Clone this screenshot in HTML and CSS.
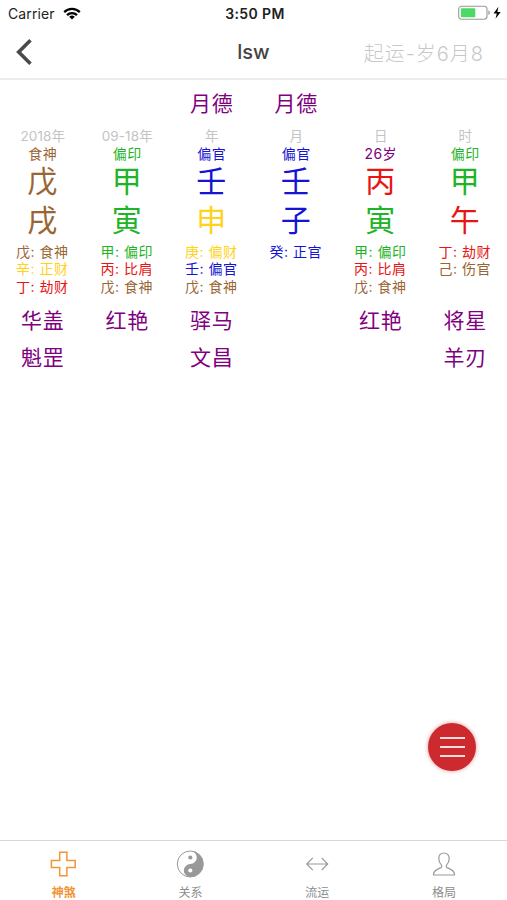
FILE: index.html
```html
<!DOCTYPE html>
<html lang="zh-CN">
<head>
<meta charset="UTF-8">
<meta name="viewport" content="width=device-width, initial-scale=1.0">
<title>lsw</title>
<link rel="stylesheet" href="styles.css">
</head>
<body>

<div class="status-bar">
  <div class="carrier">
    <span>Carrier</span>
    <svg class="wifi" viewBox="0 0 18 13" width="18" height="13">
      <g fill="none" stroke="#000" stroke-width="2.2">
        <path d="M1.2 5.1a11 11 0 0 1 15.6 0"/>
        <path d="M4 8.1a7.1 7.1 0 0 1 10 0"/>
      </g>
      <path d="M9 12.6 6.2 9.8a4 4 0 0 1 5.6 0z"/>
    </svg>
  </div>
  <div class="time">3:50 PM</div>
  <div class="power">
    <svg viewBox="0 0 44 16" width="44" height="16">
      <rect x=".7" y="1.2" width="28.3" height="13" rx="3" fill="none" stroke="#999" stroke-width="1.1"/>
      <rect x="2.9" y="3.2" width="14.4" height="9" rx="1" fill="#4cd964"/>
      <path d="M30.4 5.3c2 .7 2 4.1 0 4.8z" fill="#999"/>
      <path d="M40.4 1.8 35.6 8.4h3.2l-1.3 5.4 5.2-6.8h-3.3z"/>
    </svg>
  </div>
</div>

<div class="nav-bar">
  <svg class="back" viewBox="0 0 18 28" width="18" height="28">
    <path d="M15.500 2.300 3.700 14l11.800 11.700" fill="none" stroke="#4a4a4a" stroke-width="3.600"/>
  </svg>
  <h1>lsw</h1>
  <span class="luck">起运-岁6月8</span>
</div>

<div class="chart">
  <div class="pillar">
    <div class="top-star"></div>
    <div class="label">2018年</div>
    <div class="god earth">食神</div>
    <div class="sign earth">戊</div>
    <div class="sign earth">戌</div>
    <div class="hidden">
      <p class="earth">戊: 食神</p>
      <p class="metal">辛: 正财</p>
      <p class="fire">丁: 劫财</p>
    </div>
    <div class="star">华盖</div>
    <div class="star">魁罡</div>
  </div>

  <div class="pillar">
    <div class="top-star"></div>
    <div class="label">09-18年</div>
    <div class="god wood">偏印</div>
    <div class="sign wood">甲</div>
    <div class="sign wood">寅</div>
    <div class="hidden">
      <p class="wood">甲: 偏印</p>
      <p class="fire">丙: 比肩</p>
      <p class="earth">戊: 食神</p>
    </div>
    <div class="star">红艳</div>
  </div>

  <div class="pillar">
    <div class="top-star">月德</div>
    <div class="label">年</div>
    <div class="god water">偏官</div>
    <div class="sign water">壬</div>
    <div class="sign metal">申</div>
    <div class="hidden">
      <p class="metal">庚: 偏财</p>
      <p class="water">壬: 偏官</p>
      <p class="earth">戊: 食神</p>
    </div>
    <div class="star">驿马</div>
    <div class="star">文昌</div>
  </div>

  <div class="pillar">
    <div class="top-star">月德</div>
    <div class="label">月</div>
    <div class="god water">偏官</div>
    <div class="sign water">壬</div>
    <div class="sign water">子</div>
    <div class="hidden">
      <p class="water">癸: 正官</p>
    </div>
  </div>

  <div class="pillar">
    <div class="top-star"></div>
    <div class="label">日</div>
    <div class="god age">26岁</div>
    <div class="sign fire">丙</div>
    <div class="sign wood">寅</div>
    <div class="hidden">
      <p class="wood">甲: 偏印</p>
      <p class="fire">丙: 比肩</p>
      <p class="earth">戊: 食神</p>
    </div>
    <div class="star">红艳</div>
  </div>

  <div class="pillar">
    <div class="top-star"></div>
    <div class="label">时</div>
    <div class="god wood">偏印</div>
    <div class="sign wood">甲</div>
    <div class="sign fire">午</div>
    <div class="hidden">
      <p class="fire">丁: 劫财</p>
      <p class="earth">己: 伤官</p>
    </div>
    <div class="star">将星</div>
    <div class="star">羊刃</div>
  </div>
</div>

<button class="menu-button" aria-label="菜单">
  <span></span>
  <span></span>
  <span></span>
</button>

<div class="tab-bar">
  <a class="tab active">
    <svg viewBox="0 0 28 28" width="28" height="28">
      <path d="M10.7 2.200h7.200v8.200h8.300v7.200h-8.300v8.200h-7.200v-8.200H2.400v-7.200h8.300z" fill="none" stroke="currentColor" stroke-width="1.500"/>
    </svg>
    <span>神煞</span>
  </a>
  <a class="tab">
    <svg viewBox="0 0 28 28" width="28" height="28">
      <circle cx="14.300" cy="14" r="13" fill="#fff" stroke="#999" stroke-width="1"/>
      <path d="M14.300 1a13 13 0 0 1 0 26a6.500 6.500 0 0 1 0-13a6.500 6.500 0 0 0 0-13z" fill="#999"/>
      <circle cx="14.300" cy="7.500" r="2.100" fill="#999"/>
      <circle cx="14.300" cy="20.500" r="2.100" fill="#fff"/>
    </svg>
    <span>关系</span>
  </a>
  <a class="tab">
    <svg viewBox="0 0 28 28" width="28" height="28">
      <path d="M3.700 14h21M9.800 7.800 3.700 14l6.100 6.200M18.600 7.800l6.100 6.200-6.100 6.200" fill="none" stroke="#999" stroke-width="1.200"/>
    </svg>
    <span>流运</span>
  </a>
  <a class="tab">
    <svg viewBox="0 0 28 28" width="28" height="28">
      <path d="M14 3c-3.400 0-5.200 2.400-5.200 5.400 0 3 .9 5 2.500 6.500.7.800.6 2.200-.3 2.700-3 1.500-7.600 2.300-7.600 7.400h21.200c0-5.100-4.600-5.900-7.600-7.400-.9-.5-1-1.900-.3-2.700 1.600-1.500 2.500-3.500 2.500-6.500C19.200 5.400 17.400 3 14 3z" fill="none" stroke="#999" stroke-width="1.200"/>
    </svg>
    <span>格局</span>
  </a>
</div>

</body>
</html>
```

FILE: styles.css
```css
* {
  box-sizing: border-box;
}

body {
  margin: 0;
  height: 900px;
  display: flex;
  flex-direction: column;
  position: relative;
  overflow: hidden;
  background: #fff;
  font-family: Inter, "Noto Sans CJK SC", sans-serif;
}

/* status bar */
.status-bar {
  display: grid;
  grid-template-columns: 1fr auto 1fr;
  align-items: center;
  height: 26px;
  padding: 0 5px 0 8px;
  font-size: 14px;
  color: #222;
}

.carrier {
  display: flex;
  align-items: center;
  gap: 8px;
  letter-spacing: 0.1px;
}

.time {
  font-weight: 600;
  letter-spacing: 0.4px;
}

.power {
  display: flex;
  justify-content: flex-end;
}

/* header */
.nav-bar {
  display: grid;
  grid-template-columns: 1fr auto 1fr;
  align-items: center;
  height: 54px;
  padding: 0 15px;
  border-bottom: 2px solid #ececec;
}

.nav-bar h1 {
  margin: 0;
  font-size: 20px;
  font-weight: 500;
  color: #444;
}

.luck {
  padding-right: 8px;
  text-align: right;
  font-size: 20px;
  font-weight: 300;
  letter-spacing: 1px;
  color: #c8c8c8;
}

/* pillars */
.chart {
  flex: 1;
  display: grid;
  grid-template-columns: repeat(6, 1fr);
  align-items: start;
  padding-top: 5px;
}

.pillar {
  text-align: center;
  white-space: nowrap;
}

.top-star,
.star {
  height: 37px;
  line-height: 37px;
  padding-left: 1px;
  font-size: 21px;
  letter-spacing: 0.8px;
  color: #800080;
}

.top-star {
  height: 43px;
}

.label {
  height: 17px;
  line-height: 17px;
  padding-left: 1px;
  font-size: 13.5px;
  letter-spacing: 0.1px;
  color: #c4c4c4;
}

.god {
  height: 17px;
  line-height: 17px;
  padding-left: 1px;
  font-size: 14px;
  letter-spacing: 0.4px;
}

.sign {
  height: 38.5px;
  line-height: 38.5px;
  font-size: 30px;
}

.hidden {
  height: 63px;
  padding-top: 4px;
}

.hidden p {
  margin: 0;
  height: 17.3px;
  line-height: 17.3px;
  font-size: 14px;
  letter-spacing: 0.5px;
}

/* five elements */
.wood {
  color: #1fb428;
}

.fire {
  color: #e81515;
}

.earth {
  color: #996633;
}

.metal {
  color: #ffd21c;
}

.water {
  color: #1414d2;
}

.age {
  color: #800080;
}

/* floating button */
.menu-button {
  position: absolute;
  right: 31px;
  bottom: 129px;
  width: 48px;
  height: 48px;
  display: flex;
  flex-direction: column;
  align-items: center;
  justify-content: center;
  gap: 7px;
  padding: 0;
  border: 0;
  border-radius: 50%;
  background: #cc2a2f;
  box-shadow: 0 0 4px rgba(204, 42, 47, 0.5);
}

.menu-button span {
  width: 25px;
  height: 2px;
  background: #fbdcdc;
}

/* tabs */
.tab-bar {
  display: grid;
  grid-template-columns: repeat(4, 1fr);
  height: 60px;
  border-top: 1px solid #d8d8d8;
}

.tab {
  display: flex;
  flex-direction: column;
  align-items: center;
  padding-top: 9px;
  font-size: 12px;
  line-height: 18px;
  color: #8c8c8c;
}

.tab span {
  margin-top: 6px;
  padding-left: 1px;
}

.tab.active {
  color: #f0953a;
}

.tab.active span {
  font-weight: 700;
}
```
